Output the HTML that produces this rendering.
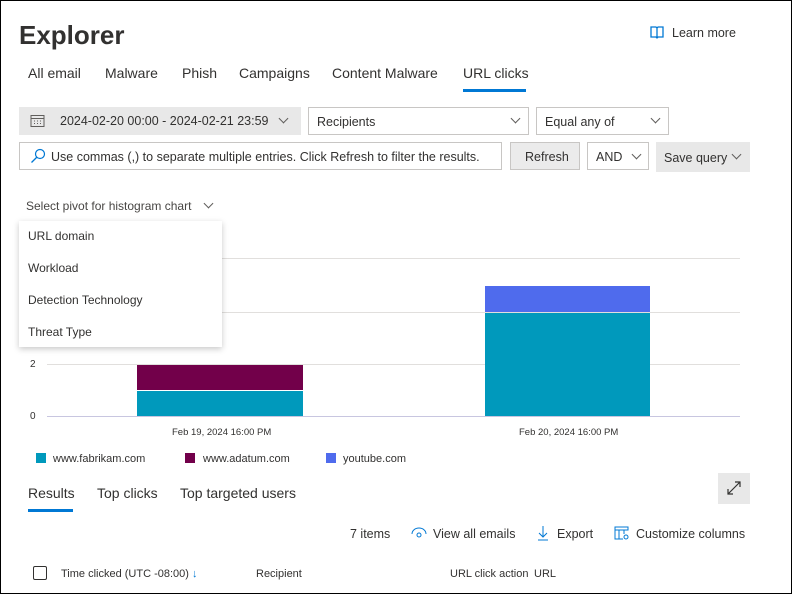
<!DOCTYPE html>
<html><head><style>
*{box-sizing:border-box;margin:0;padding:0}
body{width:792px;height:594px;overflow:hidden;background:#fff;font-family:"Segoe UI","Liberation Sans",sans-serif;color:#323130;position:relative}
.frame{position:absolute;left:0;top:0;width:792px;height:594px;border:1px solid #000}
.a{position:absolute;white-space:nowrap}
.box{position:absolute;border:1px solid #c8c6c4;background:#fff;font-size:12.5px}
.chev{position:absolute;width:7px;height:7px;border-right:1px solid #605e5c;border-bottom:1px solid #605e5c;transform:rotate(45deg)}
.grid{position:absolute;left:47px;width:693px;height:1px;background:#e1dfdd}
</style></head><body>
<div class="a" style="left:19px;top:20px;font-size:26px;font-weight:bold;color:#323130">Explorer</div>
<svg class="a" style="left:650px;top:26px" width="14" height="13" viewBox="0 0 14 13"><path d="M1 1h5l1 1 1-1h5v10H8l-1 1-1-1H1z M7 2v9" fill="none" stroke="#0078d4" stroke-width="1.3"/></svg>
<div class="a" style="left:672px;top:26px;font-size:12.5px">Learn more</div>
<div class="a" style="left:28px;top:65px;font-size:14px">All email</div>
<div class="a" style="left:105px;top:65px;font-size:14px">Malware</div>
<div class="a" style="left:182px;top:65px;font-size:14px">Phish</div>
<div class="a" style="left:239px;top:65px;font-size:14px">Campaigns</div>
<div class="a" style="left:332px;top:65px;font-size:14px">Content Malware</div>
<div class="a" style="left:463px;top:65px;font-size:14px">URL clicks</div>
<div class="a" style="left:463px;top:89px;width:63px;height:3px;background:#0078d4"></div>

<div class="a" style="left:19px;top:107px;width:282px;height:28px;background:#e8e8e8"></div>
<svg class="a" style="left:30px;top:114px" width="15" height="14" viewBox="0 0 15 14"><rect x="1" y="1.5" width="13" height="11" fill="none" stroke="#605e5c"/><path d="M1 4.5h13M4 7h1M7 7h1M10 7h1M4 9.5h1M7 9.5h1M10 9.5h1" stroke="#605e5c"/></svg>
<div class="a" style="left:60px;top:114px;font-size:12.5px">2024-02-20 00:00 - 2024-02-21 23:59</div>
<div class="chev" style="left:280px;top:115px"></div>
<div class="box" style="left:308px;top:107px;width:221px;height:28px"><span class="a" style="left:8px;top:7px">Recipients</span></div>
<div class="chev" style="left:512px;top:115px"></div>
<div class="box" style="left:536px;top:107px;width:133px;height:28px"><span class="a" style="left:8px;top:7px">Equal any of</span></div>
<div class="chev" style="left:652px;top:115px"></div>

<div class="box" style="left:19px;top:142px;width:483px;height:28px"></div>
<svg class="a" style="left:30px;top:148px" width="16" height="16" viewBox="0 0 16 16"><circle cx="10" cy="6" r="4.5" fill="none" stroke="#0078d4" stroke-width="1.2"/><path d="M7 9L1.5 14.5" stroke="#0078d4" stroke-width="1.3"/></svg>
<div class="a" style="left:51px;top:150px;font-size:12.5px">Use commas (,) to separate multiple entries. Click Refresh to filter the results.</div>
<div class="box" style="left:510px;top:142px;width:70px;height:28px;background:#ebebeb"><span class="a" style="left:14px;top:7px">Refresh</span></div>
<div class="box" style="left:587px;top:142px;width:62px;height:28px"><span class="a" style="left:8px;top:7px">AND</span></div>
<div class="chev" style="left:633px;top:151px"></div>
<div class="a" style="left:656px;top:142px;width:94px;height:30px;background:#e8e8e8"></div>
<div class="a" style="left:664px;top:151px;font-size:12.5px">Save query</div>
<div class="chev" style="left:733px;top:151px"></div>

<div class="a" style="left:26px;top:199px;font-size:12px;color:#484644">Select pivot for histogram chart</div>
<div class="chev" style="left:205px;top:200px"></div>

<div class="grid" style="top:258px"></div>
<div class="grid" style="top:312px"></div>
<div class="grid" style="top:364px"></div>
<div class="grid" style="top:416px;background:#c8c6e0"></div>
<div class="a" style="left:30px;top:359px;font-size:10px">2</div>
<div class="a" style="left:30px;top:411px;font-size:10px">0</div>
<div class="a" style="left:137px;top:365px;width:166px;height:25px;background:#72004a"></div>
<div class="a" style="left:137px;top:391px;width:166px;height:25px;background:#0099bc"></div>
<div class="a" style="left:485px;top:286px;width:165px;height:26px;background:#4f6bed"></div>
<div class="a" style="left:485px;top:313px;width:165px;height:103px;background:#0099bc"></div>
<div class="a" style="left:172px;top:427px;font-size:9.5px">Feb 19, 2024 16:00 PM</div>
<div class="a" style="left:519px;top:427px;font-size:9.5px">Feb 20, 2024 16:00 PM</div>

<div class="a" style="left:19px;top:221px;width:203px;height:126px;background:#fff;box-shadow:0 2px 6px rgba(0,0,0,.22)"></div>
<div class="a" style="left:28px;top:229px;font-size:12px">URL domain</div>
<div class="a" style="left:28px;top:261px;font-size:12px">Workload</div>
<div class="a" style="left:28px;top:293px;font-size:12px">Detection Technology</div>
<div class="a" style="left:28px;top:325px;font-size:12px">Threat Type</div>

<div class="a" style="left:36px;top:453px;width:10px;height:10px;background:#0099bc"></div>
<div class="a" style="left:53px;top:453px;font-size:11px">www.fabrikam.com</div>
<div class="a" style="left:185px;top:453px;width:10px;height:10px;background:#72004a"></div>
<div class="a" style="left:203px;top:453px;font-size:11px">www.adatum.com</div>
<div class="a" style="left:326px;top:453px;width:10px;height:10px;background:#4f6bed"></div>
<div class="a" style="left:343px;top:453px;font-size:11px">youtube.com</div>

<div class="a" style="left:28px;top:485px;font-size:14px">Results</div>
<div class="a" style="left:28px;top:509px;width:45px;height:3px;background:#0078d4"></div>
<div class="a" style="left:97px;top:485px;font-size:14px">Top clicks</div>
<div class="a" style="left:180px;top:485px;font-size:14px">Top targeted users</div>
<div class="a" style="left:718px;top:473px;width:32px;height:31px;background:#e8e8e8"></div>
<svg class="a" style="left:726px;top:480px" width="16" height="16" viewBox="0 0 16 16"><path d="M2 14L14 2M9 2h5v5M2 9v5h5" fill="none" stroke="#323130" stroke-width="1.2"/></svg>

<div class="a" style="left:350px;top:527px;font-size:12.5px">7 items</div>
<svg class="a" style="left:411px;top:527px" width="16" height="12" viewBox="0 0 16 12"><path d="M1 7a7 6 0 0 1 14 0" fill="none" stroke="#0078d4"/><circle cx="8" cy="8" r="2" fill="none" stroke="#0078d4"/></svg>
<div class="a" style="left:433px;top:527px;font-size:12.5px">View all emails</div>
<svg class="a" style="left:536px;top:525px" width="14" height="16" viewBox="0 0 14 16"><path d="M7 1v11M3 8l4 4 4-4M2 15h10" fill="none" stroke="#0078d4"/></svg>
<div class="a" style="left:557px;top:527px;font-size:12.5px">Export</div>
<svg class="a" style="left:614px;top:525px" width="16" height="16" viewBox="0 0 16 16"><path d="M1 2h13v3H1zM1 5v9h8M5 5v9M10 5v4" fill="none" stroke="#0078d4"/><circle cx="12" cy="12" r="2" fill="none" stroke="#0078d4"/></svg>
<div class="a" style="left:636px;top:527px;font-size:12.5px">Customize columns</div>

<div class="a" style="left:33px;top:566px;width:14px;height:14px;border:1px solid #323130;border-radius:2px"></div>
<div class="a" style="left:61px;top:568px;font-size:11px">Time clicked (UTC -08:00) <span style="color:#0078d4">↓</span></div>
<div class="a" style="left:256px;top:568px;font-size:11px">Recipient</div>
<div class="a" style="left:450px;top:568px;font-size:11px">URL click action</div>
<div class="a" style="left:534px;top:568px;font-size:11px">URL</div>
<div class="frame"></div>
</body></html>
